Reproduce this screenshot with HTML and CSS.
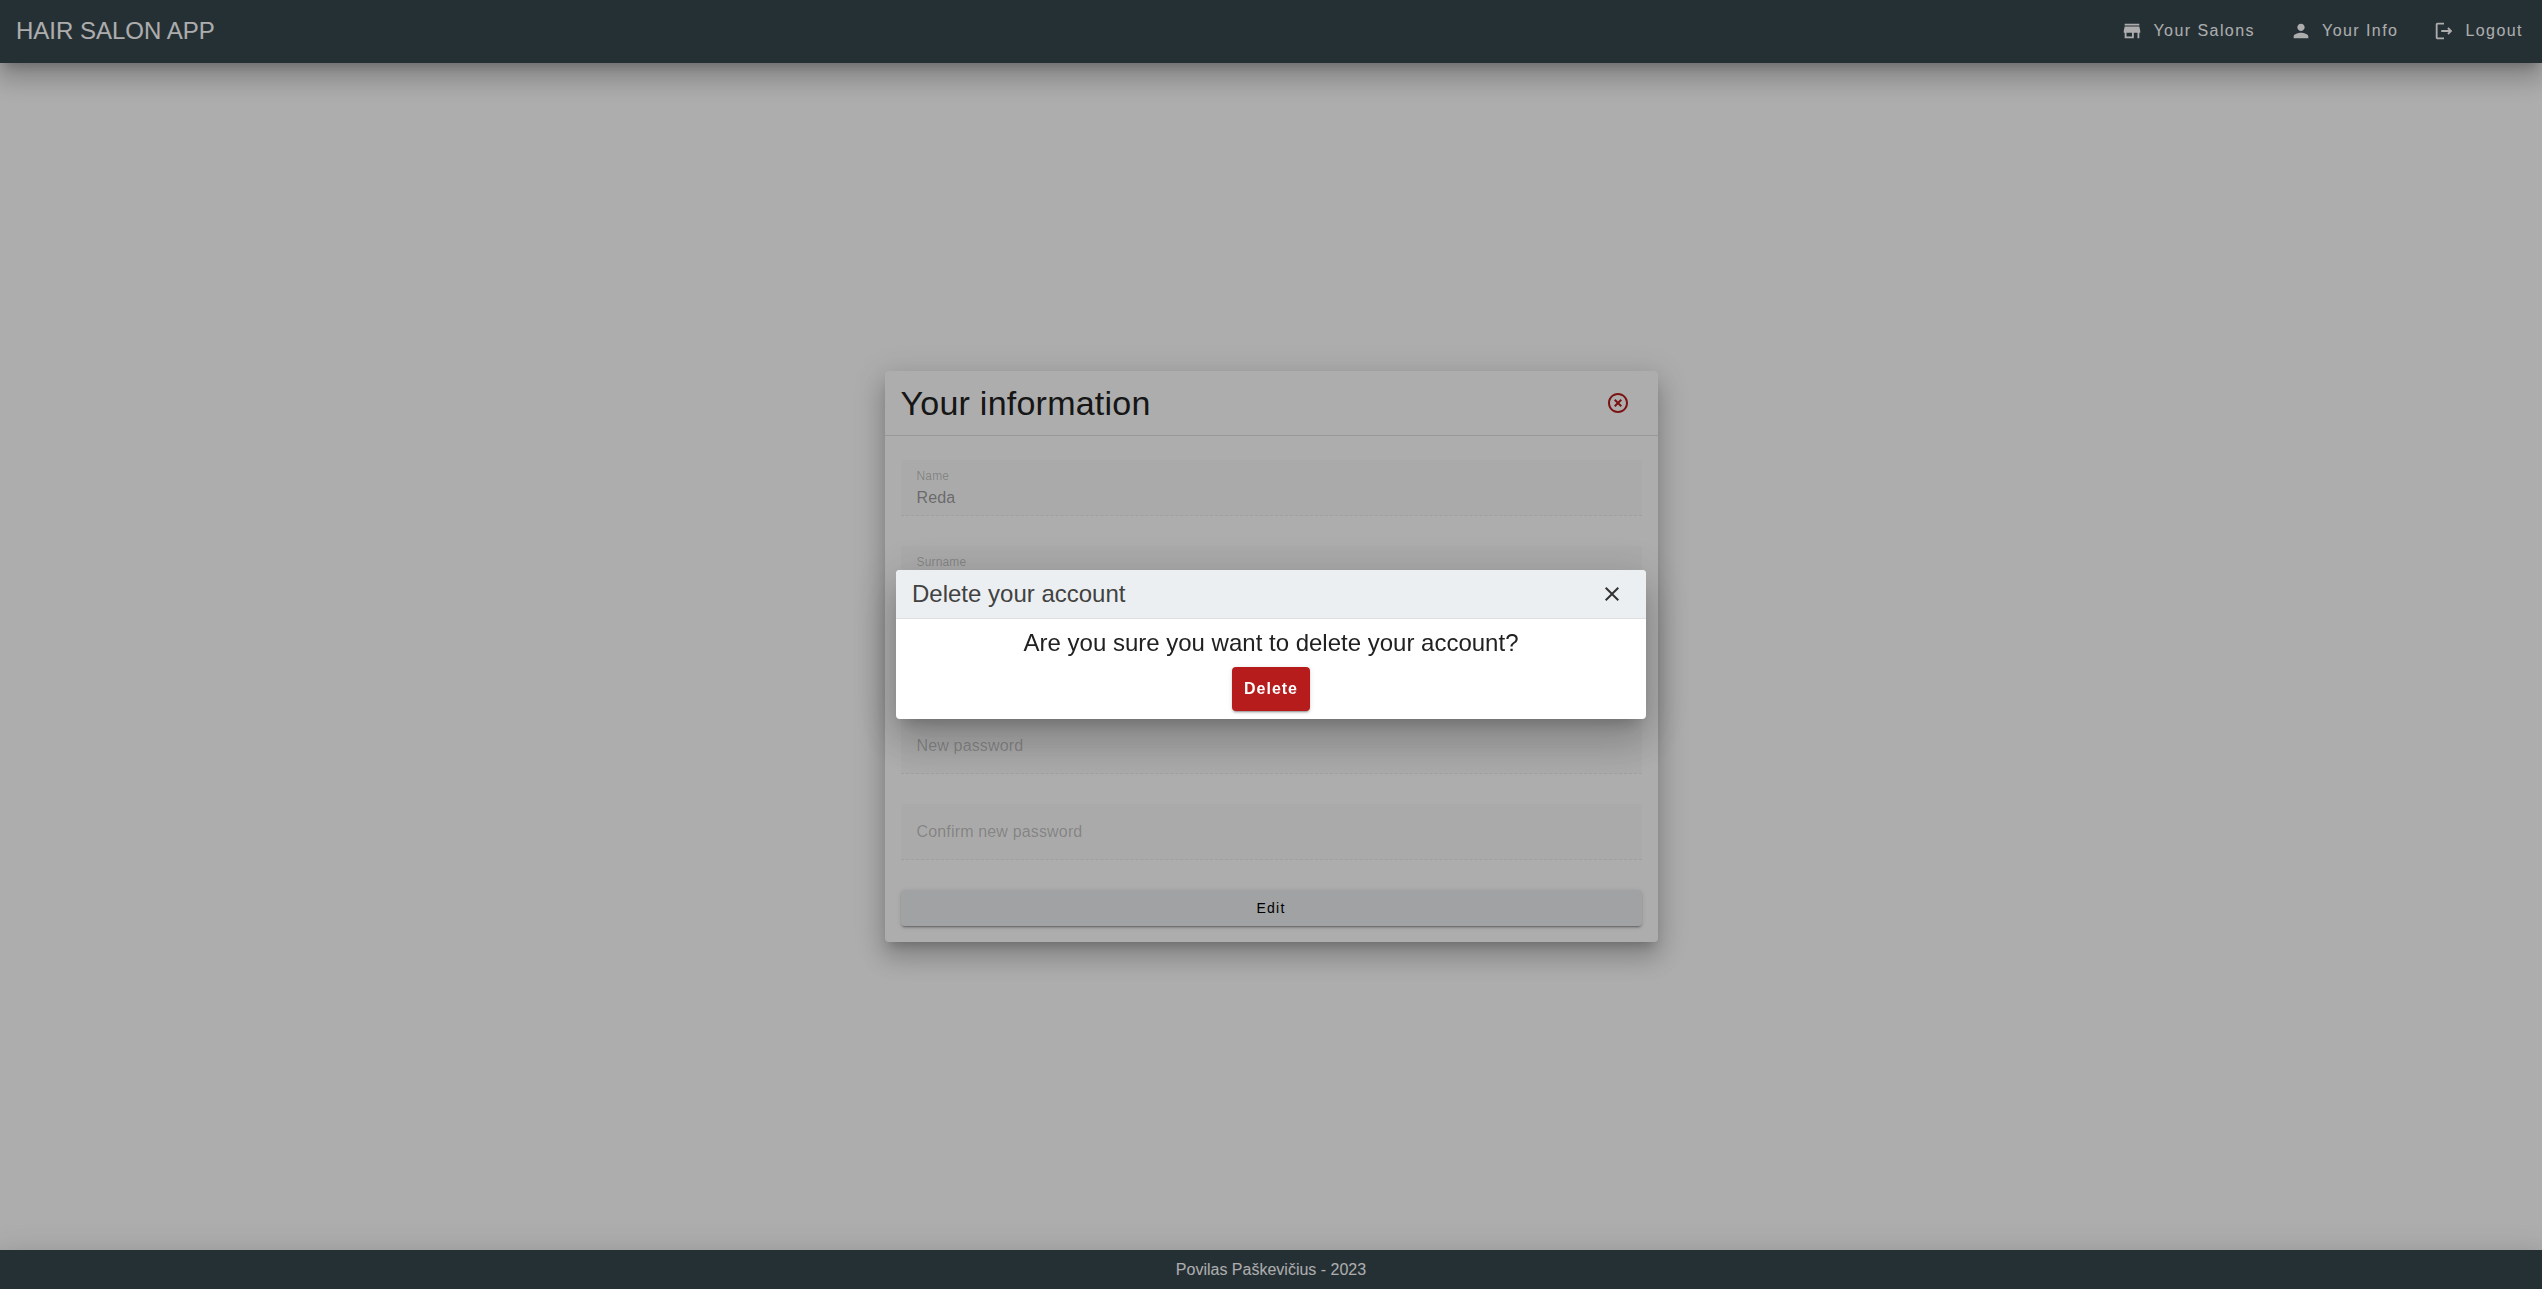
FILE: index.html
```html
<!DOCTYPE html>
<html lang="en">
<head>
<meta charset="utf-8">
<meta name="viewport" content="width=device-width, initial-scale=1">
<title>Hair Salon App</title>
<link rel="stylesheet" href="styles.css">
</head>
<body>
<header class="app-bar elevated">
  <h1 class="brand">HAIR SALON APP</h1>
  <nav class="nav">
    <a class="nav-link" href="#salons"><svg class="nav-icon" viewBox="0 0 24 24" aria-hidden="true"><path d="M20 4H4v2h16V4zm1 10v-2l-1-5H4l-1 5v2h1v6h10v-6h4v6h2v-6h1zm-9 4H6v-4h6v4z"/></svg>Your Salons</a>
    <a class="nav-link" href="#info"><svg class="nav-icon" viewBox="0 0 24 24" aria-hidden="true"><path d="M12 12c2.21 0 4-1.79 4-4s-1.79-4-4-4-4 1.79-4 4 1.79 4 4 4zm0 2c-2.67 0-8 1.34-8 4v2h16v-2c0-2.66-5.33-4-8-4z"/></svg>Your Info</a>
    <a class="nav-link" href="#logout"><svg class="nav-icon" viewBox="0 0 24 24" aria-hidden="true"><path d="M17 8l-1.410 1.410L17.170 11H9v2h8.170l-1.580 1.580L17 16l4-4-4-4zM5 5h7V3H5c-1.100 0-2 .9-2 2v14c0 1.100.9 2 2 2h7v-2H5V5z"/></svg>Logout</a>
  </nav>
</header>
<main class="content">
  <section class="card elevated">
    <header class="card-head">
      <h2 class="card-title">Your information</h2>
      <button class="icon-button danger" type="button" aria-label="Delete account"><svg class="icon" viewBox="0 0 24 24" aria-hidden="true"><path d="M12 2C6.470 2 2 6.470 2 12s4.470 10 10 10 10-4.470 10-10S17.530 2 12 2zm0 18c-4.410 0-8-3.590-8-8s3.590-8 8-8 8 3.590 8 8-3.590 8-8 8z"/><path d="M14.590 8 12 10.590 9.410 8 8 9.410 10.590 12 8 14.590 9.410 16 12 13.410 14.590 16 16 14.590 13.410 12 16 9.410z"/></svg></button>
    </header>
    <form class="form">
      <div class="field filled"><label class="field-label" for="name">Name</label><input class="field-input" id="name" type="text" value="Reda" disabled></div>
      <div class="field filled"><label class="field-label" for="surname">Surname</label><input class="field-input" id="surname" type="text" disabled></div>
      <div class="field"><label class="field-label" for="password">Password</label><input class="field-input" id="password" type="password" disabled></div>
      <div class="field"><label class="field-label" for="new-password">New password</label><input class="field-input" id="new-password" type="password" disabled></div>
      <div class="field"><label class="field-label" for="confirm">Confirm new password</label><input class="field-input" id="confirm" type="password" disabled></div>
      <button class="button edit" type="button">Edit</button>
    </form>
  </section>
</main>
<footer class="footer elevated">Povilas Paškevičius - 2023</footer>
<div class="scrim">
  <div class="dialog" role="dialog" aria-modal="true" aria-labelledby="dialog-title">
    <header class="dialog-head">
      <h2 class="dialog-title" id="dialog-title">Delete your account</h2>
      <button class="icon-button" type="button" aria-label="Close"><svg class="icon" viewBox="0 0 24 24" aria-hidden="true"><path d="M19 6.410 17.590 5 12 10.590 6.410 5 5 6.410 10.590 12 5 17.590 6.410 19 12 13.410 17.590 19 19 17.590 13.410 12z"/></svg></button>
    </header>
    <div class="dialog-body">
      <p class="question">Are you sure you want to delete your account?</p>
      <button class="button delete" type="button">Delete</button>
    </div>
  </div>
</div>
</body>
</html>
```
FILE: styles.css
```css
* { box-sizing: border-box; }

body {
  margin: 0;
  min-height: 100vh;
  display: flex;
  flex-direction: column;
  font-family: Arial, "Liberation Sans", sans-serif;
  font-size: 16px;
  background: #fff;
}

h1, h2, p { margin: 0; font-weight: 400; }

.elevated {
  box-shadow: 0 8px 10px -5px rgba(0, 0, 0, .2), 0 16px 24px 2px rgba(0, 0, 0, .14), 0 6px 30px 5px rgba(0, 0, 0, .12);
}

.app-bar {
  display: flex;
  align-items: center;
  justify-content: space-between;
  height: 63px;
  padding: 0 19px 2px 16px;
  background: #37474f;
  color: #fff;
}

.brand { font-size: 24px; line-height: 32px; }

.nav { display: flex; gap: 35px; }

.nav-link {
  display: flex;
  align-items: center;
  gap: 10px;
  color: inherit;
  text-decoration: none;
  letter-spacing: .09em;
  line-height: 24px;
}

.nav-icon { width: 22px; height: 22px; fill: currentColor; }

.content {
  flex: 1;
  display: flex;
  align-items: center;
  justify-content: center;
}

.card {
  width: min(100%, 773px);
  border-radius: 4px;
  background: #fff;
}

.card-head {
  display: flex;
  align-items: center;
  justify-content: space-between;
  height: 65px;
  padding: 0 16px;
  border-bottom: 1px solid #e0e0e0;
}

.card-title {
  font-size: 34px;
  line-height: 40px;
  letter-spacing: .007em;
  color: #212121;
}

.icon-button {
  display: flex;
  align-items: center;
  justify-content: center;
  width: 48px;
  height: 48px;
  padding: 0;
  border: 0;
  background: none;
  color: #333;
}

.icon-button.danger { color: #b71c1c; }

.icon { width: 24px; height: 24px; fill: currentColor; }

.form {
  display: flex;
  flex-direction: column;
  gap: 30px;
  padding: 24px 16px 16px;
}

.field {
  display: grid;
  height: 56px;
  padding: 0 16px;
  border-bottom: 1px dashed rgba(0, 0, 0, .06);
  border-radius: 4px 4px 0 0;
  background: #fbfbfb;
  letter-spacing: .01em;
}

.field-label, .field-input { grid-area: 1 / 1; }

.field-label {
  align-self: center;
  line-height: 20px;
  color: rgba(0, 0, 0, .24);
}

.filled .field-label { align-self: start; padding-top: 6px; font-size: 12px; }

.field-input {
  align-self: end;
  width: 100%;
  height: 28px;
  margin-bottom: 3px;
  padding: 0;
  border: 0;
  background: none;
  font: inherit;
  letter-spacing: inherit;
  color: rgba(0, 0, 0, .4);
}

.button {
  border: 0;
  border-radius: 4px;
  font-family: inherit;
  letter-spacing: .09em;
  box-shadow: 0 3px 1px -2px rgba(0, 0, 0, .2), 0 2px 2px 0 rgba(0, 0, 0, .14), 0 1px 5px 0 rgba(0, 0, 0, .12);
}

.edit { height: 36px; background: #eceff1; color: #000; font-size: 14px; }

.footer {
  padding: 10px 16px 9px;
  line-height: 20px;
  text-align: center;
  background: #37474f;
  color: #fff;
}

.scrim {
  position: fixed;
  inset: 0;
  display: flex;
  align-items: center;
  justify-content: center;
  background: rgba(0, 0, 0, .32);
}

.dialog {
  width: min(100% - 32px, 750px);
  border-radius: 4px;
  overflow: hidden;
  background: #fff;
  box-shadow: 0 11px 15px -7px rgba(0, 0, 0, .2), 0 24px 38px 3px rgba(0, 0, 0, .14), 0 9px 46px 8px rgba(0, 0, 0, .12);
}

.dialog-head {
  display: flex;
  align-items: center;
  justify-content: space-between;
  height: 49px;
  padding: 0 10px 0 16px;
  border-bottom: 1px solid #e0e0e0;
  background: #eceff1;
}

.dialog-title { font-size: 24px; line-height: 32px; color: #424242; }

.dialog-body {
  display: flex;
  flex-direction: column;
  align-items: center;
  gap: 8px;
  padding: 8px;
}

.question { font-size: 24px; line-height: 32px; color: #212121; }

.delete {
  height: 44px;
  padding: 0 12px;
  background: #b71c1c;
  color: #fff;
  font-size: 16px;
  font-weight: 700;
  letter-spacing: 1px;
}
```
